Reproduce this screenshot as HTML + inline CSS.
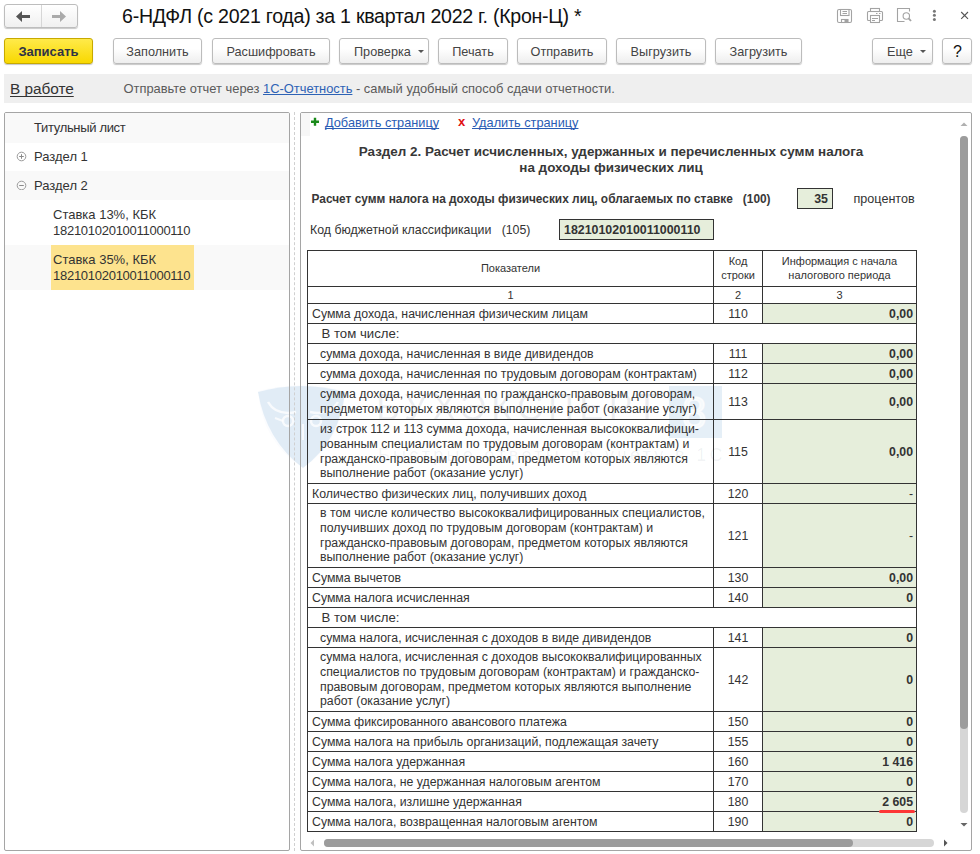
<!DOCTYPE html>
<html><head><meta charset="utf-8">
<style>
*{box-sizing:border-box;}
html,body{margin:0;padding:0;}
body{text-decoration-skip-ink:none;width:980px;height:854px;overflow:hidden;position:relative;background:#fff;font-family:"Liberation Sans",sans-serif;color:#333;}
.a{position:absolute;}
.btn{position:absolute;top:38px;height:26px;padding-top:1px;border:1px solid #bcbcbc;border-radius:3px;background:linear-gradient(#ffffff 40%,#eeeeee);box-shadow:0 1px 1px rgba(0,0,0,.22);font-size:12.7px;color:#444;text-align:center;line-height:24px;white-space:nowrap;}
.btn .dd{display:inline-block;width:0;height:0;border-left:3px solid transparent;border-right:3px solid transparent;border-top:3px solid #555;vertical-align:middle;margin-left:7px;position:relative;top:-1px;}
.tnode{position:absolute;left:1px;width:284px;font-size:12.5px;color:#333;}
.txt{position:absolute;white-space:nowrap;}
.ln{background:#333;}
.gf{background:#e6eedb;}
.th{display:flex;align-items:center;justify-content:center;text-align:center;font-size:11px;line-height:13.5px;color:#333;}
.td{display:flex;align-items:center;padding-top:2px;font-size:12.3px;line-height:14.6px;color:#333;white-space:nowrap;}
.tc{justify-content:center;}
.tv{justify-content:flex-end;padding-right:3px;font-weight:bold;}
.vh{padding-left:13.5px;font-size:13.2px;}
.fld{border:1px solid #333;background:#e6eedb;font-size:12.4px;line-height:20px;font-weight:bold;color:#333;}
</style></head><body>

<!-- nav back/forward -->
<div class="a" style="left:4px;top:4px;width:74px;height:24px;border:1px solid #bdbdbd;border-radius:3px;background:linear-gradient(#fff,#f0f0f0);box-shadow:0 1px 1px rgba(0,0,0,.22);"></div>
<div class="a" style="left:41px;top:5px;width:1px;height:22px;background:#d6d6d6;"></div>
<svg class="a" style="left:0;top:0" width="100" height="34">
  <path d="M16 16.5 L22 11 L22 15 L30 15 L30 18 L22 18 L22 22 Z" fill="#555"/>
  <path d="M66 16.5 L60 11 L60 15 L52 15 L52 18 L60 18 L60 22 Z" fill="#aaa"/>
</svg>

<!-- title -->
<div class="txt" style="left:122px;top:5px;font-size:19.6px;line-height:22px;letter-spacing:-0.27px;color:#111;">6-НДФЛ (с 2021 года) за 1 квартал 2022 г. (Крон-Ц) *</div>

<!-- title icons -->
<svg class="a" style="left:820px;top:0" width="160" height="34">
  <g fill="none" stroke="#a3a3a3" stroke-width="1.1">
    <rect x="17.5" y="9.5" width="14" height="13" rx="1.5"/>
    <rect x="20.5" y="9.5" width="8.5" height="6"/>
    <path d="M22.5 11.5 H27 M22.5 13.5 H27"/>
    <rect x="21.5" y="19.5" width="6.5" height="3"/>
  </g>
  <rect x="24.5" y="19.5" width="3.5" height="3" fill="#a3a3a3"/>
  <g fill="none" stroke="#a3a3a3" stroke-width="1.1">
    <rect x="50.5" y="8.5" width="9" height="3"/>
    <path d="M50 20.5 H48.5 Q47.5 20.5 47.5 19.5 V12.5 Q47.5 11.5 48.5 11.5 H61.5 Q62.5 11.5 62.5 12.5 V19.5 Q62.5 20.5 61.5 20.5 H60"/>
    <rect x="50.5" y="15.5" width="9" height="7"/>
    <path d="M52 18.5 H58 M52 20.5 H55 M56 13.5 H57.5 M59 13.5 H60.5"/>
  </g>
  <g fill="none" stroke="#a3a3a3" stroke-width="1.1">
    <path d="M84.5 21.5 H77.5 V8.5 H89.5 V11.5"/>
    <circle cx="86.3" cy="16" r="3.2"/>
    <path d="M88.6 18.3 L91 21" stroke-width="1.8"/>
  </g>
  <g fill="#777">
    <circle cx="114.4" cy="11.3" r="1.5"/>
    <circle cx="114.4" cy="15.3" r="1.5"/>
    <circle cx="114.4" cy="19.4" r="1.5"/>
  </g>
  <path d="M141.2 12 L148 18.8 M148 12 L141.2 18.8" stroke="#555" stroke-width="1.1" fill="none"/>
</svg>

<!-- toolbar -->
<div class="btn" style="left:4px;width:89px;border-color:#c7a900;background:linear-gradient(#ffea4a,#f8d800);font-weight:bold;font-size:13px;color:#2f3346;">Записать</div>
<div class="btn" style="left:113px;width:89px;">Заполнить</div>
<div class="btn" style="left:212px;width:118px;">Расшифровать</div>
<div class="btn" style="left:339px;width:90px;text-align:left;padding-left:14px;">Проверка<span class="dd"></span></div>
<div class="btn" style="left:438px;width:70px;">Печать</div>
<div class="btn" style="left:517px;width:90px;">Отправить</div>
<div class="btn" style="left:616px;width:90px;">Выгрузить</div>
<div class="btn" style="left:715px;width:87px;">Загрузить</div>
<div class="btn" style="left:872px;width:61px;text-align:left;padding-left:14px;">Еще<span class="dd"></span></div>
<div class="btn" style="left:942px;width:30px;font-size:16px;color:#111;padding-left:1px;">?</div>

<!-- status bar -->
<div class="a" style="left:4px;top:74px;width:968px;height:29px;background:#efefef;"></div>
<div class="txt" style="left:10px;top:79.5px;font-size:15.4px;line-height:17px;letter-spacing:-0.05px;color:#333;text-decoration:underline;text-underline-offset:2px;">В работе</div>
<div class="txt" style="left:123.5px;top:80.5px;font-size:12.9px;line-height:15px;color:#5a5a5a;">Отправьте отчет через <span style="color:#2d62b5;text-decoration:underline;">1С-Отчетность</span> - самый удобный способ сдачи отчетности.</div>

<!-- watermark -->
<svg class="a" style="left:0;top:0;pointer-events:none" width="980" height="854">
  <path d="M258 392 Q301 380 345 392 Q340 440 303 468 Q266 440 258 392 Z" fill="rgb(40,120,190)" fill-opacity="0.12"/>
  <path d="M258 391 Q301 380 345 391 Q342 442 303 468 Q262 442 258 391 Z" fill="rgb(40,120,190)" fill-opacity="0.02"/>
  <path d="M268 402 Q276 416 296 412 M338 402 Q330 416 310 412" stroke="#fff" stroke-opacity="0.75" stroke-width="2.5" fill="none"/>
  <circle cx="288" cy="421" r="5" stroke="#fff" stroke-opacity="0.75" stroke-width="2.5" fill="none"/>
  <circle cx="316" cy="421" r="5" stroke="#fff" stroke-opacity="0.75" stroke-width="2.5" fill="none"/>
  <path d="M275 418 L283 421 M303 424 V440" stroke="#fff" stroke-opacity="0.75" stroke-width="2" fill="none"/>
  <text x="376" y="420" font-family="Liberation Sans" font-size="36" letter-spacing="5.2" fill="rgb(60,70,100)" fill-opacity="0.09">БУХЭКСПЕРТ</text>
  <rect x="669" y="386" width="53" height="52" fill="rgb(40,120,190)" fill-opacity="0.12"/>
  <text x="682" y="428" font-family="Liberation Sans" font-size="44" fill="#fff" fill-opacity="0.7" stroke="#fff" stroke-opacity="0.7" stroke-width="1.5">8</text>
  <text x="378" y="461" font-family="Liberation Sans" font-size="18" letter-spacing="3.3" fill="rgb(60,70,100)" fill-opacity="0.07">Быстрые ответы по учету в 1С</text>
</svg>
<!-- tree panel -->
<div class="a" style="left:4px;top:112px;width:286px;height:739px;border:1px solid #a5a5a5;border-radius:2px;overflow:hidden;">
  <div class="a" style="left:0;top:0;width:284px;height:30px;background:#f9f9f9;"></div>
  <div class="a" style="left:0;top:58px;width:284px;height:29px;background:#f9f9f9;"></div>
  <div class="a" style="left:0;top:132px;width:284px;height:45px;background:#f9f9f9;"></div>
  <div class="a" style="left:46px;top:132px;width:143px;height:45px;background:#fde38e;"></div>
  <div class="txt" style="left:29px;top:6.5px;font-size:13px;line-height:15px;letter-spacing:-0.33px;">Титульный лист</div>
  <div class="txt" style="left:29px;top:35.5px;font-size:13px;line-height:15px;">Раздел 1</div>
  <div class="txt" style="left:29px;top:64.5px;font-size:13px;line-height:15px;">Раздел 2</div>
  <div class="txt" style="left:48px;top:93.5px;font-size:13px;line-height:16.2px;">Ставка 13%, КБК<br><span style="letter-spacing:-0.27px">18210102010011000110</span></div>
  <div class="txt" style="left:48px;top:138.5px;font-size:13px;line-height:16.2px;">Ставка 35%, КБК<br><span style="letter-spacing:-0.27px">18210102010011000110</span></div>
  <svg class="a" style="left:10px;top:37px" width="12" height="40">
    <circle cx="6.5" cy="6.5" r="4.3" fill="none" stroke="#9a9a9a" stroke-width="1"/>
    <path d="M4.2 6.5 H8.8 M6.5 4.2 V8.8" stroke="#8a8a8a" stroke-width="1"/>
    <circle cx="6.5" cy="35.5" r="4.3" fill="none" stroke="#9a9a9a" stroke-width="1"/>
    <path d="M4.2 35.5 H8.8" stroke="#8a8a8a" stroke-width="1"/>
  </svg>
</div>

<!-- splitter -->
<div class="a" style="left:294px;top:112px;width:1px;height:739px;border-left:1px dashed #d0d0d0;"></div>

<!-- right panel -->
<div class="a" style="left:300px;top:112px;width:672px;height:739px;border:1px solid #a5a5a5;border-radius:2px;"></div>
<div class="a" style="left:301px;top:113px;width:9px;height:23px;background:#f7f7f7;"></div>
<!-- links -->
<svg class="a" style="left:308px;top:114px" width="14" height="16"><path d="M3 7.8 H11 M7 3.8 V11.8" stroke="#1a8a1a" stroke-width="2.4"/></svg>
<div class="txt" style="left:325px;top:115px;font-size:12.75px;line-height:15px;color:#2a5cb4;text-decoration:underline;">Добавить страницу</div>
<div class="txt" style="left:458px;top:114px;font-size:13px;line-height:15px;color:#e01010;font-weight:bold;">x</div>
<div class="txt" style="left:472px;top:115px;font-size:12.75px;line-height:15px;color:#2a5cb4;text-decoration:underline;">Удалить страницу</div>
<!-- heading -->
<div class="txt" style="left:200px;top:144px;width:822px;text-align:center;font-size:13.45px;line-height:16px;font-weight:bold;color:#383838;"><span style="display:inline-block;text-align:center;">Раздел 2. Расчет исчисленных, удержанных и перечисленных сумм налога<br>на доходы физических лиц</span></div>
<div class="txt" style="left:311.5px;top:192px;font-size:11.9px;line-height:15px;font-weight:bold;color:#383838;">Расчет сумм налога на доходы физических лиц, облагаемых по ставке&nbsp;&nbsp; (100)</div>
<div class="a fld" style="left:797px;top:188px;width:36px;height:21px;text-align:right;padding-right:4px;">35</div>
<div class="txt" style="left:853.5px;top:191.5px;font-size:12.6px;line-height:15px;color:#333;">процентов</div>
<div class="txt" style="left:310px;top:222.5px;font-size:12.35px;line-height:15px;color:#333;">Код бюджетной классификации&nbsp;&nbsp; (105)</div>
<div class="a fld" style="left:559px;top:219px;width:155px;height:21px;padding-left:4px;">18210102010011000110</div>
<!-- table -->
<div class="a gf" style="left:763px;top:304px;width:153px;height:19px;"></div>
<div class="a gf" style="left:763px;top:344px;width:153px;height:19px;"></div>
<div class="a gf" style="left:763px;top:364px;width:153px;height:19px;"></div>
<div class="a gf" style="left:763px;top:384px;width:153px;height:35px;"></div>
<div class="a gf" style="left:763px;top:420px;width:153px;height:63px;"></div>
<div class="a gf" style="left:763px;top:484px;width:153px;height:19px;"></div>
<div class="a gf" style="left:763px;top:504px;width:153px;height:63px;"></div>
<div class="a gf" style="left:763px;top:568px;width:153px;height:19px;"></div>
<div class="a gf" style="left:763px;top:588px;width:153px;height:19px;"></div>
<div class="a gf" style="left:763px;top:628px;width:153px;height:19px;"></div>
<div class="a gf" style="left:763px;top:648px;width:153px;height:63px;"></div>
<div class="a gf" style="left:763px;top:712px;width:153px;height:19px;"></div>
<div class="a gf" style="left:763px;top:732px;width:153px;height:19px;"></div>
<div class="a gf" style="left:763px;top:752px;width:153px;height:19px;"></div>
<div class="a gf" style="left:763px;top:772px;width:153px;height:19px;"></div>
<div class="a gf" style="left:763px;top:792px;width:153px;height:19px;"></div>
<div class="a gf" style="left:763px;top:812px;width:153px;height:19px;"></div>
<div class="a th" style="left:308px;top:251px;width:405px;height:35px;">Показатели</div>
<div class="a th" style="left:714px;top:251px;width:48px;height:35px;">Код<br>строки</div>
<div class="a th" style="left:763px;top:251px;width:153px;height:35px;">Информация с начала<br>налогового периода</div>
<div class="a th" style="left:308px;top:288px;width:405px;height:16px;">1</div>
<div class="a th" style="left:714px;top:288px;width:48px;height:16px;">2</div>
<div class="a th" style="left:763px;top:288px;width:153px;height:16px;">3</div>
<div class="a td" style="left:308px;top:304px;width:405px;height:19px;padding-left:4px;">Сумма дохода, начисленная физическим лицам</div>
<div class="a td tc" style="left:714px;top:304px;width:48px;height:19px;">110</div>
<div class="a td tv" style="left:763px;top:304px;width:153px;height:19px;">0,00</div>
<div class="a td vh" style="left:308px;top:324px;width:608px;height:19px;">В том числе:</div>
<div class="a td" style="left:308px;top:344px;width:405px;height:19px;padding-left:12px;">сумма дохода, начисленная в виде дивидендов</div>
<div class="a td tc" style="left:714px;top:344px;width:48px;height:19px;">111</div>
<div class="a td tv" style="left:763px;top:344px;width:153px;height:19px;">0,00</div>
<div class="a td" style="left:308px;top:364px;width:405px;height:19px;padding-left:12px;">сумма дохода, начисленная по трудовым договорам (контрактам)</div>
<div class="a td tc" style="left:714px;top:364px;width:48px;height:19px;">112</div>
<div class="a td tv" style="left:763px;top:364px;width:153px;height:19px;">0,00</div>
<div class="a td" style="left:308px;top:384px;width:405px;height:35px;padding-left:12px;padding-top:0;">сумма дохода, начисленная по гражданско-правовым договорам,<br>предметом которых являются выполнение работ (оказание услуг)</div>
<div class="a td tc" style="left:714px;top:384px;width:48px;height:35px;">113</div>
<div class="a td tv" style="left:763px;top:384px;width:153px;height:35px;">0,00</div>
<div class="a td" style="left:308px;top:420px;width:405px;height:63px;padding-left:12px;padding-top:0;">из строк 112 и 113 сумма дохода, начисленная высококвалифици-<br>рованным специалистам по трудовым договорам (контрактам) и<br>гражданско-правовым договорам, предметом которых являются<br>выполнение работ (оказание услуг)</div>
<div class="a td tc" style="left:714px;top:420px;width:48px;height:63px;">115</div>
<div class="a td tv" style="left:763px;top:420px;width:153px;height:63px;">0,00</div>
<div class="a td" style="left:308px;top:484px;width:405px;height:19px;padding-left:4px;">Количество физических лиц, получивших доход</div>
<div class="a td tc" style="left:714px;top:484px;width:48px;height:19px;">120</div>
<div class="a td tv" style="left:763px;top:484px;width:153px;height:19px;font-weight:normal;">-</div>
<div class="a td" style="left:308px;top:504px;width:405px;height:63px;padding-left:12px;padding-top:0;">в том числе количество высококвалифицированных специалистов,<br>получивших доход по трудовым договорам (контрактам) и<br>гражданско-правовым договорам, предметом которых являются<br>выполнение работ (оказание услуг)</div>
<div class="a td tc" style="left:714px;top:504px;width:48px;height:63px;">121</div>
<div class="a td tv" style="left:763px;top:504px;width:153px;height:63px;font-weight:normal;">-</div>
<div class="a td" style="left:308px;top:568px;width:405px;height:19px;padding-left:4px;">Сумма вычетов</div>
<div class="a td tc" style="left:714px;top:568px;width:48px;height:19px;">130</div>
<div class="a td tv" style="left:763px;top:568px;width:153px;height:19px;">0,00</div>
<div class="a td" style="left:308px;top:588px;width:405px;height:19px;padding-left:4px;">Сумма налога исчисленная</div>
<div class="a td tc" style="left:714px;top:588px;width:48px;height:19px;">140</div>
<div class="a td tv" style="left:763px;top:588px;width:153px;height:19px;">0</div>
<div class="a td vh" style="left:308px;top:608px;width:608px;height:19px;">В том числе:</div>
<div class="a td" style="left:308px;top:628px;width:405px;height:19px;padding-left:12px;">сумма налога, исчисленная с доходов в виде дивидендов</div>
<div class="a td tc" style="left:714px;top:628px;width:48px;height:19px;">141</div>
<div class="a td tv" style="left:763px;top:628px;width:153px;height:19px;">0</div>
<div class="a td" style="left:308px;top:648px;width:405px;height:63px;padding-left:12px;padding-top:0;">сумма налога, исчисленная с доходов высококвалифицированных<br>специалистов по трудовым договорам (контрактам) и гражданско-<br>правовым договорам, предметом которых являются выполнение<br>работ (оказание услуг)</div>
<div class="a td tc" style="left:714px;top:648px;width:48px;height:63px;">142</div>
<div class="a td tv" style="left:763px;top:648px;width:153px;height:63px;">0</div>
<div class="a td" style="left:308px;top:712px;width:405px;height:19px;padding-left:4px;">Сумма фиксированного авансового платежа</div>
<div class="a td tc" style="left:714px;top:712px;width:48px;height:19px;">150</div>
<div class="a td tv" style="left:763px;top:712px;width:153px;height:19px;">0</div>
<div class="a td" style="left:308px;top:732px;width:405px;height:19px;padding-left:4px;">Сумма налога на прибыль организаций, подлежащая зачету</div>
<div class="a td tc" style="left:714px;top:732px;width:48px;height:19px;">155</div>
<div class="a td tv" style="left:763px;top:732px;width:153px;height:19px;">0</div>
<div class="a td" style="left:308px;top:752px;width:405px;height:19px;padding-left:4px;">Сумма налога удержанная</div>
<div class="a td tc" style="left:714px;top:752px;width:48px;height:19px;">160</div>
<div class="a td tv" style="left:763px;top:752px;width:153px;height:19px;">1 416</div>
<div class="a td" style="left:308px;top:772px;width:405px;height:19px;padding-left:4px;">Сумма налога, не удержанная налоговым агентом</div>
<div class="a td tc" style="left:714px;top:772px;width:48px;height:19px;">170</div>
<div class="a td tv" style="left:763px;top:772px;width:153px;height:19px;">0</div>
<div class="a td" style="left:308px;top:792px;width:405px;height:19px;padding-left:4px;">Сумма налога, излишне удержанная</div>
<div class="a td tc" style="left:714px;top:792px;width:48px;height:19px;">180</div>
<div class="a td tv" style="left:763px;top:792px;width:153px;height:19px;">2 605</div>
<div class="a td" style="left:308px;top:812px;width:405px;height:19px;padding-left:4px;">Сумма налога, возвращенная налоговым агентом</div>
<div class="a td tc" style="left:714px;top:812px;width:48px;height:19px;">190</div>
<div class="a td tv" style="left:763px;top:812px;width:153px;height:19px;">0</div>
<div class="a ln" style="left:307px;top:250px;width:610px;height:1px;"></div>
<div class="a ln" style="left:307px;top:286px;width:610px;height:1px;"></div>
<div class="a ln" style="left:307px;top:303px;width:610px;height:1px;"></div>
<div class="a ln" style="left:307px;top:323px;width:610px;height:1px;"></div>
<div class="a ln" style="left:307px;top:343px;width:610px;height:1px;"></div>
<div class="a ln" style="left:307px;top:363px;width:610px;height:1px;"></div>
<div class="a ln" style="left:307px;top:383px;width:610px;height:1px;"></div>
<div class="a ln" style="left:307px;top:419px;width:610px;height:1px;"></div>
<div class="a ln" style="left:307px;top:483px;width:610px;height:1px;"></div>
<div class="a ln" style="left:307px;top:503px;width:610px;height:1px;"></div>
<div class="a ln" style="left:307px;top:567px;width:610px;height:1px;"></div>
<div class="a ln" style="left:307px;top:587px;width:610px;height:1px;"></div>
<div class="a ln" style="left:307px;top:607px;width:610px;height:1px;"></div>
<div class="a ln" style="left:307px;top:627px;width:610px;height:1px;"></div>
<div class="a ln" style="left:307px;top:647px;width:610px;height:1px;"></div>
<div class="a ln" style="left:307px;top:711px;width:610px;height:1px;"></div>
<div class="a ln" style="left:307px;top:731px;width:610px;height:1px;"></div>
<div class="a ln" style="left:307px;top:751px;width:610px;height:1px;"></div>
<div class="a ln" style="left:307px;top:771px;width:610px;height:1px;"></div>
<div class="a ln" style="left:307px;top:791px;width:610px;height:1px;"></div>
<div class="a ln" style="left:307px;top:811px;width:610px;height:1px;"></div>
<div class="a ln" style="left:307px;top:831px;width:610px;height:1px;"></div>
<div class="a ln" style="left:307px;top:250px;width:1px;height:582px;"></div>
<div class="a ln" style="left:916px;top:250px;width:1px;height:582px;"></div>
<div class="a ln" style="left:713px;top:250px;width:1px;height:74px;"></div>
<div class="a ln" style="left:762px;top:250px;width:1px;height:74px;"></div>
<div class="a ln" style="left:713px;top:343px;width:1px;height:265px;"></div>
<div class="a ln" style="left:762px;top:343px;width:1px;height:265px;"></div>
<div class="a ln" style="left:713px;top:627px;width:1px;height:205px;"></div>
<div class="a ln" style="left:762px;top:627px;width:1px;height:205px;"></div>
<!-- red underline -->
<div class="a" style="left:879px;top:810px;width:36px;height:3px;background:#fd3636;border-radius:1.5px;"></div>
<!-- vertical scrollbar -->
<svg class="a" style="left:958px;top:118px" width="12" height="12"><path d="M2.5 8 L6 4.5 L9.5 8 Z" fill="#b0b0b0"/></svg>
<div class="a" style="left:960px;top:136px;width:8px;height:677px;border-radius:4px;background:#d6d6d6;"></div>
<div class="a" style="left:960px;top:136px;width:8px;height:593px;border-radius:4px;background:#9c9c9c;"></div>
<svg class="a" style="left:958px;top:819px" width="12" height="12"><path d="M2.5 4 L6 7.5 L9.5 4 Z" fill="#666"/></svg>
<!-- horizontal scrollbar -->
<svg class="a" style="left:306px;top:837px" width="12" height="12"><path d="M8 2.5 L4.5 6 L8 9.5 Z" fill="#c0c0c0"/></svg>
<div class="a" style="left:324px;top:839px;width:610px;height:8px;border-radius:4px;background:#d6d6d6;"></div>
<div class="a" style="left:324px;top:839px;width:529px;height:8px;border-radius:4px;background:#9c9c9c;"></div>
<svg class="a" style="left:940px;top:837px" width="12" height="12"><path d="M4 2.5 L7.5 6 L4 9.5 Z" fill="#555"/></svg>
</body></html>
